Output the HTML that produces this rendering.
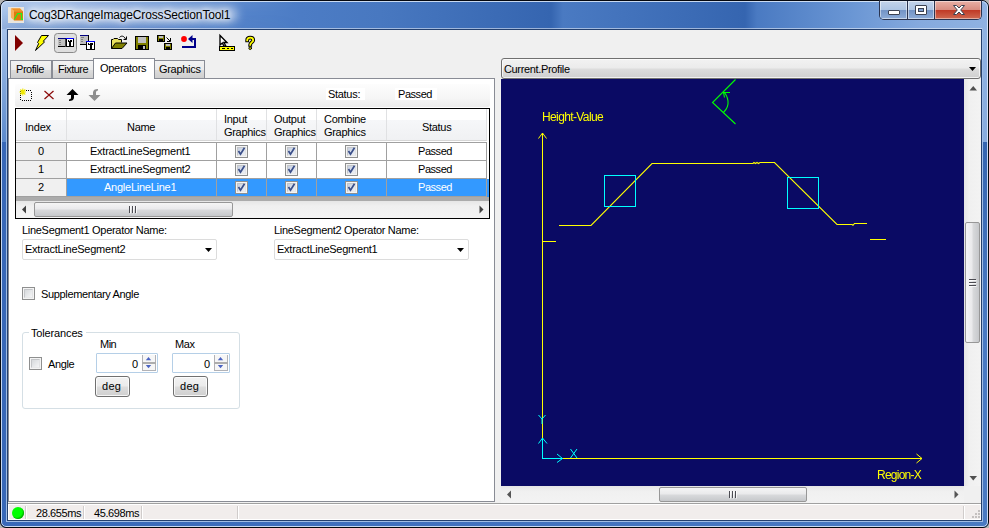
<!DOCTYPE html>
<html><head><meta charset="utf-8">
<style>
*{box-sizing:border-box;margin:0;padding:0}
html,body{width:989px;height:528px;overflow:hidden;background:#b4b4b4}
body{font-family:"Liberation Sans",sans-serif;font-size:11px;color:#000;position:relative}
.a{position:absolute}
#frame{position:absolute;left:0;top:0;width:989px;height:528px;border-radius:7px 7px 6px 6px;background:linear-gradient(90deg,#3868b8,#4070be 40%,#4a7ac2);border:1px solid #05080f;overflow:hidden}
#tb{position:absolute;left:0;top:0;width:987px;height:29px;background:linear-gradient(90deg,#a6c2ea 0,#92b3e2 30px,#749bd7 100px,#5a89ce 200px,#4c7cc5 300px,#4878c0 380px,#3565b0 550px,#4a7ac2 562px,#3565b0 744px,#4a7ac2 756px,#6a96d4 850px,#86aade 920px,#8fb2e2 987px)}
#tb:before{content:"";position:absolute;left:0;top:0;width:300px;height:28px;background:linear-gradient(rgba(255,255,255,.22),rgba(255,255,255,0) 45%,rgba(40,70,140,.16));-webkit-mask-image:linear-gradient(90deg,#000,#000 60px,transparent);mask-image:linear-gradient(90deg,#000,#000 60px,transparent)}
#tb:after{content:"";position:absolute;left:5px;right:5px;bottom:1px;height:1px;background:rgba(255,255,255,.5)}
#lsd{position:absolute;left:0;top:28px;width:7px;height:113px;background:linear-gradient(#a6c2ea,#5c8acc)}
#rsd{position:absolute;right:0;top:28px;width:7px;height:500px;background:linear-gradient(#8fb2e2,#88acde 113px,#3565b0 113px,#4a7ac2 300px)}
#hl{position:absolute;left:0;top:0;right:0;bottom:0;border:1px solid rgba(225,236,250,.85);border-radius:6px 6px 5px 5px}
#hl2{position:absolute;left:5px;top:27px;width:977px;height:494px;border:1px solid #a0bce4;border-top:none}
#client{position:absolute;left:8px;top:30px;width:973px;height:490px;background:#f0f0f0;box-shadow:0 0 0 1px #24406e}
#title{position:absolute;left:29px;top:7px;letter-spacing:-.15px;font-size:12px;line-height:16px;white-space:nowrap;text-shadow:0 0 5px #fff,0 0 9px #fff,0 0 12px rgba(255,255,255,.8)}
.t{position:absolute;white-space:nowrap;line-height:13px;height:13px}
.w{color:#fff}
/* caption buttons */
#cap{position:absolute;left:879px;top:0;width:103px;height:20px;border:1px solid #2a3450;border-top-color:#0a1020;border-radius:0 0 5px 5px;overflow:hidden}
#cap div{position:absolute;top:0;height:18px}
/* tabs */
.tab{position:absolute;top:60px;height:18px;border:1px solid #898c95;border-bottom:none;background:linear-gradient(#f2f2f2,#ebebeb 50%,#dddddd 50%,#cfcfcf)}
.tab.sel{top:58px;height:21px;background:#fff;z-index:3}
#tp{position:absolute;left:8px;top:78px;width:487px;height:424px;background:#fff;border:1px solid #898c95}
/* grid */
#grid{position:absolute;left:15px;top:108px;width:475px;height:111px;border:1px solid #000;background:#ababab;overflow:hidden}
.hd{position:absolute;top:0;height:31px;background:linear-gradient(#fff 0,#fff 11px,#f6f7f9 11px,#f0f1f3 31px);border-right:1px solid #e0e1e3}
.rh{position:absolute;left:0;width:51px;height:18px;background:#f0f0f0;border-right:1px solid #a0a0a0;border-bottom:1px solid #a0a0a0}
.c{position:absolute;height:18px;background:#fff;border-right:1px solid #a0a0a0;border-bottom:1px solid #a0a0a0}
.c.s{background:#3399ff}
.cb{position:absolute;width:13px;height:13px;border:1px solid #8e8f8f;background:#f4f4f4}
.cb i{position:absolute;left:1px;top:1px;width:9px;height:9px;border:1px solid;border-color:#c4c6c9 #e2e3e5 #e8e9ea #c4c6c9;background:linear-gradient(135deg,#d6d9dc,#f4f5f6)}
.cb.k i{background:linear-gradient(135deg,#c5cfe0,#eef1f6)}
.combo{position:absolute;height:21px;border:1px solid #dcdcdc;border-radius:2px;background:#fff}
.btn{position:absolute;height:21px;border:1px solid #707070;border-radius:3px;background:linear-gradient(#f2f2f2,#ebebeb 48%,#dddddd 52%,#cfcfcf);box-shadow:inset 0 0 0 1px rgba(255,255,255,.8)}
.num{position:absolute;height:20px;border:1px solid #b5cfe7;border-radius:1px;background:#fff}
.sb{background:#efefef}
.thumb{position:absolute;border:1px solid #979797;border-radius:2px}
</style></head><body>
<div id="frame"><div id="lsd"></div><div id="rsd"></div><div id="tb"></div><div id="hl2"></div><div id="hl"></div></div>
<div id="client"></div>
<div class="a" style="left:26px;top:7px;width:212px;height:15px;background:rgba(255,255,255,.5);filter:blur(5px);border-radius:8px"></div>
<div id="title">Cog3DRangeImageCrossSectionTool1</div>
<div id="cap">
<div style="left:0;width:28px;background:linear-gradient(#c3d3ea,#adc4e3 49%,#7394c6 52%,#8dacd8);border-right:1px solid #2a3450;box-shadow:inset 0 0 0 1px rgba(255,255,255,.5)"></div>
<div style="left:28px;width:27px;background:linear-gradient(#c3d3ea,#adc4e3 49%,#7394c6 52%,#8dacd8);border-right:1px solid #2a3450;box-shadow:inset 0 0 0 1px rgba(255,255,255,.5)"></div>
<div style="left:55px;width:46px;background:linear-gradient(#e8b0a6,#d88c80 49%,#c03a26 52%,#cf6a52);box-shadow:inset 0 0 0 1px rgba(255,255,255,.45)"></div>
</div>
<svg class="a" style="left:879px;top:0" width="102" height="20" viewBox="0 0 102 20">
<rect x="9.5" y="10.5" width="11" height="4" rx=".5" fill="#fff" stroke="#3c4252"/>
<rect x="36.5" y="5.5" width="11" height="9" rx=".5" fill="#fff" stroke="#3c4252"/><rect x="39.5" y="8.5" width="5" height="3" fill="#7f9fd0" stroke="#3c4252"/>
<path d="M74.5 5.5h3l2.5 2.5l2.5-2.5h3l-3.8 4.5l3.8 4.5h-3l-2.5-2.5l-2.5 2.5h-3l3.8-4.5z" fill="#fff" stroke="#3c4252" stroke-linejoin="round"/>
</svg>
<svg class="a" style="left:8px;top:7px" width="16" height="16" viewBox="0 0 16 16">
<rect width="16" height="16" fill="#e9e5de"/>
<path d="M2.9 1.2H12L15 4.2H6z" fill="#f09428"/><path d="M2.9 1.2L6 4.2V13.5L2.9 10.5z" fill="#f9b060"/><path d="M6 4.2H15V13.5H6z" fill="#e07a0c"/>
<path d="M6.3 12.5L9.7 6.7H13.5V12.4H15" fill="none" stroke="#22ee22" stroke-width="1.2"/>
</svg>
<svg class="a" style="left:8px;top:30px" width="260" height="28" viewBox="8 30 260 28" shape-rendering="crispEdges">
<path d="M15 35v16l8-8z" fill="#800000" shape-rendering="geometricPrecision"/>
<path d="M41.5 35.5h7l-5.2 5.7l1.2 .8l-9 8.5l3.2-7l-1.2-1z" fill="#ffff00" stroke="#000" stroke-width="1" shape-rendering="geometricPrecision"/>
<rect x="54.5" y="33.5" width="22" height="19" rx="3" fill="#dedede" stroke="#8a8a8a" shape-rendering="geometricPrecision"/>
<g><rect x="58" y="38" width="8" height="9" fill="#c0c0c0"/><rect x="58" y="38" width="8" height="1" fill="#808080"/><rect x="58" y="46" width="8" height="1" fill="#000"/><rect x="59" y="40" width="2" height="1" fill="#808080"/><rect x="59" y="42" width="2" height="1" fill="#808080"/><rect x="59" y="44" width="2" height="1" fill="#808080"/>
<rect x="66" y="38" width="8" height="9" fill="#000"/><rect x="67" y="39" width="6" height="7" fill="#fff"/><rect x="66" y="38" width="8" height="1" fill="#0000ff"/><rect x="68" y="40" width="4" height="2" fill="#000"/><rect x="69" y="40" width="1" height="1" fill="#fff"/><rect x="69.25" y="42" width="1.5" height="4" fill="#000"/><rect x="58" y="38" width="8" height="1" fill="#000080"/><rect x="65" y="39" width="1" height="8" fill="#404040"/></g>
<g><rect x="80" y="35" width="9" height="10" fill="#000"/><rect x="80" y="35" width="8" height="9" fill="#c0c0c0"/><rect x="80" y="35" width="8" height="1" fill="#000080"/><rect x="81" y="37" width="3" height="1" fill="#808080"/><rect x="81" y="39" width="2" height="1" fill="#808080"/><rect x="81" y="41" width="2" height="1" fill="#808080"/>
<rect x="86" y="41" width="9" height="9" fill="#000"/><rect x="87" y="42" width="7" height="7" fill="#fff"/><rect x="86" y="41" width="9" height="1" fill="#0000ff"/><rect x="88" y="43" width="5" height="2" fill="#000"/><rect x="89" y="43" width="1" height="1" fill="#fff"/><rect x="89.5" y="45" width="2" height="4" fill="#000"/></g>
<g shape-rendering="geometricPrecision"><path d="M111.5 48.5v-9h1.5l1-1h3.5l1 1h3v3" fill="#e8e060" stroke="#000"/><path d="M111.5 48.5l4-5.5h11.5l-5 5.5z" fill="#808000" stroke="#000"/><path d="M119.5 37.5c1.5-2 4.5-2 6 1.5" fill="none" stroke="#000"/><path d="M126.5 36.5v3h-3" fill="none" stroke="#000"/></g>
<g><rect x="135" y="36" width="14" height="14" fill="#000"/><rect x="136" y="37" width="12" height="12" fill="#808000"/><rect x="138" y="37" width="8" height="6" fill="#c0c0c0"/><rect x="138" y="45" width="8" height="4" fill="#000"/><rect x="143" y="46" width="2" height="3" fill="#c0c0c0"/></g>
<g><rect x="157" y="35" width="8" height="7" fill="#000"/><rect x="158" y="36" width="6" height="5" fill="#808000"/><rect x="159" y="36" width="4" height="2" fill="#c0c0c0"/><rect x="159" y="39" width="4" height="2" fill="#000"/>
<rect x="164" y="43" width="8" height="7" fill="#000"/><rect x="165" y="44" width="6" height="5" fill="#808000"/><rect x="166" y="44" width="4" height="2" fill="#c0c0c0"/><rect x="166" y="47" width="4" height="2" fill="#000"/>
<path d="M166.5 37.5l3.5 3.5m0.5-3v3.5h-3.5" fill="none" stroke="#000" shape-rendering="geometricPrecision"/></g>
<g shape-rendering="geometricPrecision"><circle cx="184" cy="39" r="2.9" fill="#ff0000"/><path d="M188 39l4.5-4v3h3.5v10h-14v-2h12v-6h-1.5v3z" fill="#00008b"/></g>
<g shape-rendering="geometricPrecision"><path d="M220 35.5v9.5l2.3-2l1.8 3.3l1.5-0.8l-1.8-3h3.2z" fill="#fff" stroke="#000" stroke-width="1.35"/><rect x="219.5" y="46.5" width="15" height="4" fill="#ffff00" stroke="#000"/><path d="M222 48.5h3m2 0h2m2 0h2" stroke="#000"/></g>
<g shape-rendering="geometricPrecision" fill="none" stroke-linecap="square"><path d="M247.2 40.3c0-1.8 1.2-2.6 3-2.6s3 .9 3 2.5c0 2-3 2.3-3 4.6" stroke="#000" stroke-width="3.8"/><path d="M247.2 40.3c0-1.8 1.2-2.6 3-2.6s3 .9 3 2.5c0 2-3 2.3-3 4.6" stroke="#ffff00" stroke-width="1.8"/><circle cx="250.2" cy="48.2" r="1.3" fill="#ffff00" stroke="#000" stroke-width="1"/></g>
</svg>
<div id="tp"></div>
<div class="tab" style="left:10px;width:42px"></div><div class="tab" style="left:52px;width:42px"></div><div class="tab" style="left:153px;width:52px"></div><div class="tab sel" style="left:93px;width:62px"></div>
<div class="t " style="left:16px;top:63px;letter-spacing:-0.45px;font-size:11px;line-height:13px;height:13px;z-index:5">Profile</div>
<div class="t " style="left:58px;top:63px;letter-spacing:-0.5px;font-size:11px;line-height:13px;height:13px;z-index:5">Fixture</div>
<div class="t " style="left:100px;top:62px;letter-spacing:-0.3px;font-size:11px;line-height:13px;height:13px;z-index:5">Operators</div>
<div class="t " style="left:159px;top:63px;letter-spacing:-0.3px;font-size:11px;line-height:13px;height:13px;z-index:5">Graphics</div>
<div class="a" style="left:15px;top:84px;width:475px;height:23px;background:linear-gradient(#fdfdfd,#f6f6f6 60%,#ececec);border-radius:2px"></div>
<svg class="a" style="left:15px;top:84px" width="100" height="23" viewBox="15 84 100 23">
<rect x="20.5" y="90.5" width="11" height="10" rx="1.5" fill="none" stroke="#000" stroke-dasharray="1 1" shape-rendering="crispEdges"/>
<path d="M19.5 92h6.5M22.8 88.5v7M20.3 89.5l5 5M25.3 89.5l-5 5" stroke="#f0e800" stroke-width="1.1"/>
<path d="M44.5 91l4.5 4l4.5-4M44.5 99l4.5-4l4.5 4" stroke="#8b0a0a" stroke-width="1.3" fill="none"/>
<path d="M72.5 89L78.5 95H74V97.5C74 100 72 101 69 101V99.5C70.5 99.5 71 98.5 71 97.5V95H66.5z" fill="#000"/>
<path d="M94.5 101L88.5 95H93V92.5C93 90 95 89 98 89V90.5C96.5 90.5 96 91.5 96 92.5V95H100.5z" fill="#8e8e8e"/>
</svg>
<div class="a" style="left:326px;top:88px;width:39px;height:12px;background:#fff"></div>
<div class="a" style="left:395px;top:88px;width:42px;height:12px;background:#fff"></div>
<div class="t " style="left:328px;top:88px;letter-spacing:-0.3px;font-size:11px;line-height:13px;height:13px;">Status:</div>
<div class="t " style="left:398px;top:88px;letter-spacing:-0.45px;font-size:11px;line-height:13px;height:13px;">Passed</div>
<div id="grid"><div class="hd" style="left:0px;width:51px"></div><div class="hd" style="left:51px;width:150px"></div><div class="hd" style="left:201px;width:50px"></div><div class="hd" style="left:251px;width:50px"></div><div class="hd" style="left:301px;width:70px"></div><div class="hd" style="left:371px;width:100px"></div><div class="a" style="left:0;top:31px;width:473px;height:1px;background:#d6d6d6"></div><div class="a" style="left:0;top:32px;width:473px;height:1px;background:#fff"></div><div class="a" style="left:0;top:33px;width:471px;height:1px;background:#a0a0a0"></div><div class="a" style="left:471px;top:0;width:2px;height:34px;background:#fff"></div><div class="rh" style="top:34px"></div><div class="c" style="left:51px;top:34px;width:150px"></div><div class="c" style="left:201px;top:34px;width:50px"></div><div class="c" style="left:251px;top:34px;width:50px"></div><div class="c" style="left:301px;top:34px;width:70px"></div><div class="c" style="left:371px;top:34px;width:100px"></div><div class="a" style="left:471px;top:34px;width:2px;height:18px;background:#fff"></div><div class="cb k" style="left:219px;top:36px"><i></i><svg class="a" style="left:1px;top:1px" width="9" height="9" viewBox="0 0 9 9"><path d="M1.5 4l2 3.2l4-6.5" fill="none" stroke="#3b4f8a" stroke-width="1.7"/></svg></div><div class="cb k" style="left:269px;top:36px"><i></i><svg class="a" style="left:1px;top:1px" width="9" height="9" viewBox="0 0 9 9"><path d="M1.5 4l2 3.2l4-6.5" fill="none" stroke="#3b4f8a" stroke-width="1.7"/></svg></div><div class="cb k" style="left:329px;top:36px"><i></i><svg class="a" style="left:1px;top:1px" width="9" height="9" viewBox="0 0 9 9"><path d="M1.5 4l2 3.2l4-6.5" fill="none" stroke="#3b4f8a" stroke-width="1.7"/></svg></div><div class="rh" style="top:52px"></div><div class="c" style="left:51px;top:52px;width:150px"></div><div class="c" style="left:201px;top:52px;width:50px"></div><div class="c" style="left:251px;top:52px;width:50px"></div><div class="c" style="left:301px;top:52px;width:70px"></div><div class="c" style="left:371px;top:52px;width:100px"></div><div class="a" style="left:471px;top:52px;width:2px;height:18px;background:#fff"></div><div class="cb k" style="left:219px;top:54px"><i></i><svg class="a" style="left:1px;top:1px" width="9" height="9" viewBox="0 0 9 9"><path d="M1.5 4l2 3.2l4-6.5" fill="none" stroke="#3b4f8a" stroke-width="1.7"/></svg></div><div class="cb k" style="left:269px;top:54px"><i></i><svg class="a" style="left:1px;top:1px" width="9" height="9" viewBox="0 0 9 9"><path d="M1.5 4l2 3.2l4-6.5" fill="none" stroke="#3b4f8a" stroke-width="1.7"/></svg></div><div class="cb k" style="left:329px;top:54px"><i></i><svg class="a" style="left:1px;top:1px" width="9" height="9" viewBox="0 0 9 9"><path d="M1.5 4l2 3.2l4-6.5" fill="none" stroke="#3b4f8a" stroke-width="1.7"/></svg></div><div class="rh" style="top:70px"></div><div class="c s" style="left:51px;top:70px;width:150px"></div><div class="c s" style="left:201px;top:70px;width:50px"></div><div class="c s" style="left:251px;top:70px;width:50px"></div><div class="c s" style="left:301px;top:70px;width:70px"></div><div class="c s" style="left:371px;top:70px;width:100px"></div><div class="a" style="left:471px;top:70px;width:2px;height:18px;background:#3399ff"></div><div class="cb k" style="left:219px;top:72px"><i></i><svg class="a" style="left:1px;top:1px" width="9" height="9" viewBox="0 0 9 9"><path d="M1.5 4l2 3.2l4-6.5" fill="none" stroke="#3b4f8a" stroke-width="1.7"/></svg></div><div class="cb k" style="left:269px;top:72px"><i></i><svg class="a" style="left:1px;top:1px" width="9" height="9" viewBox="0 0 9 9"><path d="M1.5 4l2 3.2l4-6.5" fill="none" stroke="#3b4f8a" stroke-width="1.7"/></svg></div><div class="cb k" style="left:329px;top:72px"><i></i><svg class="a" style="left:1px;top:1px" width="9" height="9" viewBox="0 0 9 9"><path d="M1.5 4l2 3.2l4-6.5" fill="none" stroke="#3b4f8a" stroke-width="1.7"/></svg></div><div class="a sb" style="left:0;top:92px;width:473px;height:17px;background:linear-gradient(#e6e6e6,#f0f0f0 30%,#f3f3f3)"></div><div class="thumb" style="left:18px;top:93px;width:199px;height:15px;background:linear-gradient(#f5f5f5,#e9e9eb 48%,#d9dadc 52%,#c6c8cb)"></div><svg class="a" style="left:0;top:92px" width="473" height="17" viewBox="0 0 473 17"><path d="M6 8.5l4-4v8z" fill="#404040"/><path d="M467.5 8.5l-4-4v8z" fill="#404040"/><path d="M113 5h1v7h-1zM116 5h1v7h-1zM119 5h1v7h-1z" fill="#4c4c52"/><path d="M114.5 5v7.5m3-7.5v7.5m3-7.5v7.5" stroke="#fff" stroke-width="1" opacity=".8"/></svg></div>
<div class="t " style="left:25px;top:121px;letter-spacing:-0.2px;font-size:11px;line-height:13px;height:13px;">Index</div>
<div class="t " style="left:127px;top:121px;letter-spacing:-0.3px;font-size:11px;line-height:13px;height:13px;">Name</div>
<div class="t " style="left:224px;top:113px;letter-spacing:-0.3px;font-size:11px;line-height:13px;height:13px;">Input</div>
<div class="t " style="left:224px;top:126px;letter-spacing:-0.3px;font-size:11px;line-height:13px;height:13px;">Graphics</div>
<div class="t " style="left:274px;top:113px;letter-spacing:-0.3px;font-size:11px;line-height:13px;height:13px;">Output</div>
<div class="t " style="left:274px;top:126px;letter-spacing:-0.3px;font-size:11px;line-height:13px;height:13px;">Graphics</div>
<div class="t " style="left:324px;top:113px;letter-spacing:-0.3px;font-size:11px;line-height:13px;height:13px;">Combine</div>
<div class="t " style="left:324px;top:126px;letter-spacing:-0.3px;font-size:11px;line-height:13px;height:13px;">Graphics</div>
<div class="t " style="left:422px;top:121px;letter-spacing:-0.3px;font-size:11px;line-height:13px;height:13px;">Status</div>
<div class="t " style="left:38px;top:145px;letter-spacing:0px;font-size:11px;line-height:13px;height:13px;">0</div>
<div class="t " style="left:90px;top:145px;letter-spacing:-0.25px;font-size:11px;line-height:13px;height:13px;">ExtractLineSegment1</div>
<div class="t " style="left:418px;top:145px;letter-spacing:-0.45px;font-size:11px;line-height:13px;height:13px;">Passed</div>
<div class="t " style="left:38px;top:163px;letter-spacing:0px;font-size:11px;line-height:13px;height:13px;">1</div>
<div class="t " style="left:90px;top:163px;letter-spacing:-0.25px;font-size:11px;line-height:13px;height:13px;">ExtractLineSegment2</div>
<div class="t " style="left:418px;top:163px;letter-spacing:-0.45px;font-size:11px;line-height:13px;height:13px;">Passed</div>
<div class="t " style="left:38px;top:181px;letter-spacing:0px;font-size:11px;line-height:13px;height:13px;">2</div>
<div class="t w" style="left:104px;top:181px;letter-spacing:-0.25px;font-size:11px;line-height:13px;height:13px;">AngleLineLine1</div>
<div class="t w" style="left:418px;top:181px;letter-spacing:-0.45px;font-size:11px;line-height:13px;height:13px;">Passed</div>
<div class="t " style="left:22px;top:224px;letter-spacing:-0.3px;font-size:11px;line-height:13px;height:13px;">LineSegment1 Operator Name:</div>
<div class="t " style="left:274px;top:224px;letter-spacing:-0.3px;font-size:11px;line-height:13px;height:13px;">LineSegment2 Operator Name:</div>
<div class="combo" style="left:22px;top:239px;width:195px;height:21px;"></div>
<div class="t " style="left:25px;top:243px;letter-spacing:-0.25px;font-size:11px;line-height:13px;height:13px;">ExtractLineSegment2</div>
<svg class="a" style="left:205px;top:248px" width="7" height="4"><path d="M0 0h7l-3.5 4z" fill="#000"/></svg>
<div class="combo" style="left:274px;top:239px;width:195px;height:21px;"></div>
<div class="t " style="left:277px;top:243px;letter-spacing:-0.25px;font-size:11px;line-height:13px;height:13px;">ExtractLineSegment1</div>
<svg class="a" style="left:457px;top:248px" width="7" height="4"><path d="M0 0h7l-3.5 4z" fill="#000"/></svg>
<div class="cb" style="left:22px;top:287px"><i></i></div>
<div class="t " style="left:41px;top:288px;letter-spacing:-0.35px;font-size:11px;line-height:13px;height:13px;">Supplementary Angle</div>
<div class="a" style="left:22px;top:332px;width:218px;height:77px;border:1px solid #d5dfe5;border-radius:3px"></div>
<div class="a" style="left:29px;top:330px;width:57px;height:13px;background:#fff"></div>
<div class="t " style="left:31px;top:327px;letter-spacing:-0.15px;font-size:11px;line-height:13px;height:13px;">Tolerances</div>
<div class="t " style="left:100px;top:338px;letter-spacing:-0.5px;font-size:11px;line-height:13px;height:13px;">Min</div>
<div class="t " style="left:175px;top:338px;letter-spacing:-0.4px;font-size:11px;line-height:13px;height:13px;">Max</div>
<div class="cb" style="left:29px;top:357px"><i></i></div>
<div class="t " style="left:48px;top:358px;letter-spacing:-0.35px;font-size:11px;line-height:13px;height:13px;">Angle</div>
<div class="num" style="left:96px;top:353px;width:62px;height:20px;"><svg class="a" style="right:1px;top:1px" width="14" height="16" viewBox="0 0 14 16"><rect width="14" height="16" fill="#f6f6f6"/><path d="M.5 0v16M13.5 0v16M0 15.5h14" stroke="#b2b2b6" fill="none"/><rect x="0" y="7" width="14" height="2" fill="#adadad"/><path d="M3.8 5.2l2.7-3.2l2.7 3.2z" fill="#4b63c2"/><path d="M3.8 10l2.7 3.2l2.7-3.2z" fill="#4b63c2"/></svg></div>
<div class="num" style="left:172px;top:353px;width:58px;height:20px;"><svg class="a" style="right:1px;top:1px" width="14" height="16" viewBox="0 0 14 16"><rect width="14" height="16" fill="#f6f6f6"/><path d="M.5 0v16M13.5 0v16M0 15.5h14" stroke="#b2b2b6" fill="none"/><rect x="0" y="7" width="14" height="2" fill="#adadad"/><path d="M3.8 5.2l2.7-3.2l2.7 3.2z" fill="#4b63c2"/><path d="M3.8 10l2.7 3.2l2.7-3.2z" fill="#4b63c2"/></svg></div>
<div class="t " style="left:132px;top:358px;letter-spacing:0px;font-size:11px;line-height:13px;height:13px;">0</div>
<div class="t " style="left:204px;top:358px;letter-spacing:0px;font-size:11px;line-height:13px;height:13px;">0</div>
<div class="btn" style="left:95px;top:376px;width:35px;height:21px;"></div>
<div class="btn" style="left:173px;top:376px;width:35px;height:21px;"></div>
<div class="t " style="left:102px;top:380px;letter-spacing:0.3px;font-size:11px;line-height:13px;height:13px;">deg</div>
<div class="t " style="left:180px;top:380px;letter-spacing:0.3px;font-size:11px;line-height:13px;height:13px;">deg</div>
<div class="a" style="left:501px;top:58px;width:480px;height:21px;border:1px solid #707070;border-radius:3px;background:linear-gradient(#f2f2f2,#ebebeb 48%,#dddddd 52%,#cfcfcf);box-shadow:inset 0 0 0 1px rgba(255,255,255,.7)"></div>
<div class="t " style="left:504px;top:63px;letter-spacing:-0.35px;font-size:11px;line-height:13px;height:13px;">Current.Profile</div>
<svg class="a" style="left:969px;top:67px" width="7" height="4"><path d="M0 0h7l-3.5 4z" fill="#000"/></svg>
<div class="a" style="left:501px;top:79px;width:463px;height:407px;background:#0a0a64"></div>
<div class="a" style="left:964px;top:79px;width:17px;height:407px;background:linear-gradient(90deg,#e5e5e5,#f0f0f0 30%,#f3f3f3)"></div>
<div class="a" style="left:501px;top:486px;width:463px;height:17px;background:linear-gradient(#e5e5e5,#f0f0f0 30%,#f3f3f3)"></div>
<div class="a" style="left:964px;top:486px;width:17px;height:17px;background:#f0f0f0"></div>
<div class="thumb" style="left:965px;top:222px;width:15px;height:121px;background:linear-gradient(90deg,#f5f5f5,#e9e9eb 48%,#d9dadc 52%,#c6c8cb)"></div>
<div class="thumb" style="left:659px;top:487px;width:148px;height:15px;background:linear-gradient(#f5f5f5,#e9e9eb 48%,#d9dadc 52%,#c6c8cb)"></div>
<svg class="a" style="left:501px;top:79px" width="480" height="424" viewBox="501 79 480 424">
<path d="M969.5 90.5h7.5l-3.75-4.5z" fill="#505050"/><path d="M969.5 476h7.5l-3.75 4.5z" fill="#505050"/>
<path d="M507 494.5l4-4v8z" fill="#555"/><path d="M958.5 494.5l-4-4v8z" fill="#555"/>
<path d="M968 279.5h8m-8 2h8m-8 2h8m-8 2h8" stroke="#3c404c" stroke-width="1" opacity=".0"/>
<path d="M969 279h7v1h-7zM969 282h7v1h-7zM969 285h7v1h-7z" fill="#4c4c52"/><path d="M969 280.5h7.5m-7.5 3h7.5m-7.5 3h7.5" stroke="#fff" opacity=".8"/>
<path d="M729 491h1v7h-1zM732 491h1v7h-1zM735 491h1v7h-1z" fill="#4c4c52"/><path d="M730.5 491v7.5m3-7.5v7.5m3-7.5v7.5" stroke="#fff" opacity=".8"/>
</svg>
<svg class="a" style="left:501px;top:79px" width="463" height="407" viewBox="501 79 463 407" shape-rendering="crispEdges" fill="none">
<g stroke="#ffff00" stroke-width="1">
<path d="M542.5 133v305.5"/><path d="M538.5 138.5l4-5.5l4 5.5" shape-rendering="geometricPrecision"/>
<path d="M562 458.5h360"/><path d="M916.5 454l5.5 4.5l-5.5 4.5" shape-rendering="geometricPrecision"/>
<path d="M542 241.5h14"/><path d="M870 239.5h16"/>
<path d="M559 225.5H591L652 163.5H753l1-1l1.5 1l1.5-1l1.5 1l1.5-1H774.5L837 224.5H852l1 .800l1.5-1.8H867" shape-rendering="geometricPrecision" stroke-width="1.1"/>
</g>
<g stroke="#00ffff" stroke-width="1">
<rect x="604.5" y="175.5" width="31" height="31"/><rect x="787.5" y="177.5" width="31" height="31"/>
<path d="M542.5 438v20.5h20"/><path d="M538.5 443.5l4-5.5l4.5 5.5M557 454l5.5 4.5l-5.5 4" shape-rendering="geometricPrecision"/>
<path d="M538.5 415l3.5 4l3.5-4m-3.5 4v5M570.5 449l6.5 9m0-9l-6.5 9" shape-rendering="geometricPrecision"/>
</g>
<g stroke="#00ff00" stroke-width="1.1" shape-rendering="geometricPrecision">
<path d="M735.5 79.5L712.5 102.5L735.5 124"/><path d="M723.5 112.5C727 109 728.5 105 728 101C727.5 97 726 94 723.5 92"/><path d="M730 92.5H723.5L724.5 97.5"/>
</g>
</svg>
<div class="t " style="left:542px;top:110px;letter-spacing:-0.62px;font-size:12px;line-height:14px;height:14px;color:#ffff00;will-change:transform">Height-Value</div>
<div class="t " style="left:877px;top:468px;letter-spacing:-0.75px;font-size:12px;line-height:14px;height:14px;color:#ffff00;will-change:transform">Region-X</div>
<div class="a" style="left:8px;top:503px;width:973px;height:1px;background:#a0a0a0"></div>
<div class="a" style="left:8px;top:504px;width:973px;height:1px;background:#fff"></div>
<div class="a" style="left:8px;top:505px;width:973px;height:15px;background:#f1edec;border-bottom:1px solid #fff;border-left:1px solid #fff;border-right:1px solid #fff"></div>
<div class="a" style="left:12px;top:507px;width:12px;height:12px;border-radius:6px;background:#00ff00;box-shadow:inset -1px -1px 1px #00b000"></div>
<div class="a" style="left:25px;top:506px;width:1px;height:13px;background:#d0cccb;box-shadow:1px 0 0 #fff"></div>
<div class="a" style="left:83px;top:506px;width:1px;height:13px;background:#d0cccb;box-shadow:1px 0 0 #fff"></div>
<div class="a" style="left:141px;top:506px;width:1px;height:13px;background:#d0cccb;box-shadow:1px 0 0 #fff"></div>
<div class="a" style="left:237px;top:506px;width:1px;height:13px;background:#d0cccb;box-shadow:1px 0 0 #fff"></div>
<div class="a" style="left:963px;top:506px;width:1px;height:13px;background:#d0cccb;box-shadow:1px 0 0 #fff"></div>
<div class="t " style="left:36px;top:507px;letter-spacing:-0.4px;font-size:11px;line-height:13px;height:13px;">28.655ms</div>
<div class="t " style="left:94px;top:507px;letter-spacing:-0.4px;font-size:11px;line-height:13px;height:13px;">45.698ms</div>
<svg class="a" style="left:969px;top:508px" width="12" height="12"><path d="M9 2h2v2h-2zM6 5h2v2h-2zM9 5h2v2h-2zM3 8h2v2h-2zM6 8h2v2h-2zM9 8h2v2h-2z" fill="#c4c0bf"/></svg>
</body></html>
